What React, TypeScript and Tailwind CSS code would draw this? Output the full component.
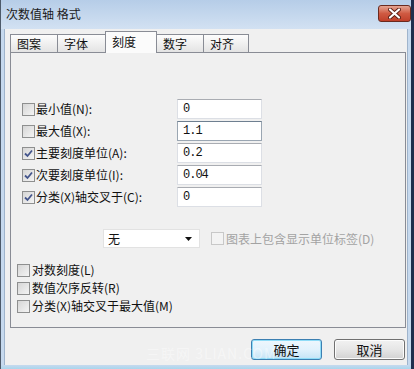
import React from 'react';

const cjk = { fontFamily: '"Noto Sans CJK SC", "Liberation Sans", sans-serif' };

type BoxState = 'off' | 'on' | 'disabled';

const CheckBox: React.FC<{ state: BoxState }> = ({ state }) => (
  <div
    className={`w-[13px] h-[13px] shrink-0 border flex items-center justify-center ${
      state === 'disabled'
        ? 'border-[#c8c8c8] bg-[#f3f3f3]'
        : 'border-[#8e8f8f] bg-gradient-to-br from-[#d6d6d6] to-[#f4f4f4]'
    }`}
  >
    {state === 'on' && (
      <svg width="9" height="9" viewBox="0 0 9 9">
        <path d="M1 4.5 L3.5 7 L8 1.5" fill="none" stroke="#44558c" strokeWidth="1.8" />
      </svg>
    )}
  </div>
);

const rows = [
  { label: '最小值(N):', value: '0', state: 'off' as BoxState, focus: false },
  { label: '最大值(X):', value: '1.1', state: 'off' as BoxState, focus: true },
  { label: '主要刻度单位(A):', value: '0.2', state: 'on' as BoxState, focus: false },
  { label: '次要刻度单位(I):', value: '0.04', state: 'on' as BoxState, focus: false },
  { label: '分类(X)轴交叉于(C):', value: '0', state: 'on' as BoxState, focus: false },
];

const tabs = [
  { name: '图案', w: 'w-[48px]' },
  { name: '字体', w: 'w-[49px]' },
  { name: '刻度', w: 'w-[52px]' },
  { name: '数字', w: 'w-[48px]' },
  { name: '对齐', w: 'w-[46px]' },
];

const App: React.FC = () => {
  return (
    <div
      className="relative w-[414px] h-[369px] flex flex-col overflow-hidden bg-[#c6d9ee] border-l border-l-[#4d5a6a] border-r-[3px] border-r-[#1f2f4e] text-[12px] text-[#111]"
      style={cjk}
    >
      {/* Title bar */}
      <div className="h-[29px] shrink-0 flex items-start justify-between bg-gradient-to-b from-[#b6cde8] to-[#d2e1f2]">
        <span className="pl-[5px] pt-[5px] text-[12px] text-[#1a1a1a]">次数值轴 格式</span>
        <div className="mt-[5px] w-[33px] h-[17px] rounded-[3px] border border-[#6b2a1f] bg-gradient-to-b from-[#e4a392] via-[#cf5a42] to-[#c0402a] flex items-center justify-center">
          <svg width="13" height="11" viewBox="0 0 13 11">
            <path d="M2 1.5 L11 9.5 M11 1.5 L2 9.5" stroke="#5a1e14" strokeWidth="4" strokeLinecap="round" />
            <path d="M2 1.5 L11 9.5 M11 1.5 L2 9.5" stroke="#ffffff" strokeWidth="2.2" strokeLinecap="round" />
          </svg>
        </div>
      </div>

      {/* Body */}
      <div className="mx-[3px] h-[336px] shrink-0 bg-[#f0f0f0] border-x border-[#9fb4cc] flex flex-col pl-[5px]">
        {/* Tabs */}
        <div className="flex items-end h-[23px]">
          {tabs.map((t, i) =>
            t.name === '刻度' ? (
              <div
                key={t.name}
                className={`${t.w} h-[22px] -ml-px -mb-px relative z-10 border border-b-0 border-[#898c95] bg-[#fbfbfb] pl-[6px] pt-[1px] leading-[17px]`}
              >
                {t.name}
              </div>
            ) : (
              <div
                key={t.name}
                className={`${t.w} h-[18px] ${i > 0 ? '-ml-px' : ''} border border-b-0 border-[#898c95] bg-gradient-to-b from-[#fdfdfd] to-[#e3e3e3] pl-[6px] leading-[17px]`}
              >
                {t.name}
              </div>
            )
          )}
        </div>

        {/* Panel */}
        <div className="w-[396px] h-[276px] border border-[#898c95] bg-[#f0f0f0] flex flex-col pt-[45px]">
          {rows.map(r => (
            <div key={r.label} className="h-[22px] flex items-center pl-[11px]">
              <CheckBox state={r.state} />
              <span className="w-[142px] pl-[1px] whitespace-nowrap">{r.label}</span>
              <div
                className={`w-[85px] h-[20px] bg-white border flex items-center pl-[5px] font-['Liberation_Mono',monospace] text-[12px] tracking-[-1px] ${
                  r.focus
                    ? 'border-[#9aa6b2] border-t-[#6e7f90] bg-[#fffefa]'
                    : 'border-[#dcdfe5] border-t-[#a9acb2]'
                }`}
              >
                {r.value}
              </div>
            </div>
          ))}

          <div className="mt-[21px] h-[19px] flex items-center pl-[92px]">
            <div className="w-[97px] h-[19px] bg-white border border-[#e2e2e2] flex items-center justify-between pl-[4px] pr-[7px]">
              <span>无</span>
              <svg width="7" height="4" viewBox="0 0 7 4">
                <path d="M0 0 H7 L3.5 4 Z" fill="#111" />
              </svg>
            </div>
            <div className="ml-[11px] flex items-center">
              <CheckBox state="disabled" />
              <span className="pl-[2px] text-[#a3a3a3] whitespace-nowrap">图表上包含显示单位标签(D)</span>
            </div>
          </div>

          <div className="mt-[13px] flex flex-col pl-[6px]">
            {['对数刻度(L)', '数值次序反转(R)', '分类(X)轴交叉于最大值(M)'].map(l => (
              <div key={l} className="h-[18px] flex items-center">
                <CheckBox state="off" />
                <span className="pl-[2px] whitespace-nowrap">{l}</span>
              </div>
            ))}
          </div>
        </div>

        {/* Buttons */}
        <div className="mt-[11px] flex justify-end gap-[12px] pr-[2px] text-[13px]">
          <button className="w-[71px] h-[21px] rounded-[3px] border border-[#3c7fb1] bg-gradient-to-b from-[#eef7fd] via-[#e2f2fc] to-[#c4e4f6] shadow-[inset_0_0_0_1px_#8fdcf7] flex items-center justify-center">
            确定
          </button>
          <button className="w-[71px] h-[21px] rounded-[3px] border border-[#707070] bg-gradient-to-b from-[#f2f2f2] via-[#e6e6e6] to-[#d2d2d2] shadow-[inset_0_0_0_1px_#fcfcfc] flex items-center justify-center">
            取消
          </button>
        </div>
      </div>

      {/* faint watermark */}
      <span className="absolute left-[145px] top-[343px] text-[14px] tracking-[1px] text-white/40 pointer-events-none">
        三联网 3LIAN.COM
      </span>

      <div className="flex-1 bg-gradient-to-b from-[#c6d9ee] to-[#a9d6ec]" />
    </div>
  );
};

export default App;
